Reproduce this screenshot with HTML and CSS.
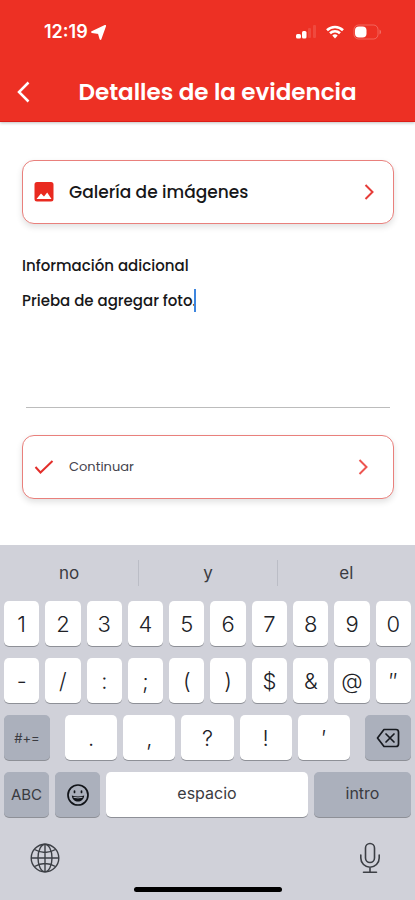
FILE: index.html
```html
<!DOCTYPE html>
<html lang="es">
<head>
<meta charset="utf-8">
<meta name="viewport" content="width=device-width, initial-scale=1">
<title>Detalles de la evidencia</title>
<link rel="stylesheet" href="styles.css">
</head>
<body>
<div class="screen">
  <header class="header">
    <div class="status">
      <span class="clock">12:19
        <svg width="15" height="15" viewBox="0 0 15 15"><path d="M14.200.8 9.500 14 7.800 8.200 1 7Z" fill="#fff" stroke="#fff" stroke-width="1.800" stroke-linejoin="round"/></svg>
      </span>
      <span class="signals">
        <svg width="21" height="14" viewBox="0 0 21 14" fill="#fff"><rect x="0" y="9" width="5" height="4.500" rx="1.500"/><rect x="6" y="6" width="4.500" height="7.500" rx="1.500"/><rect x="12" y="3" width="3" height="10" rx="1" opacity=".12"/><rect x="17" y="0" width="3" height="13" rx="1" opacity=".12"/></svg>
        <svg width="18" height="14" viewBox="0 0 18 14" fill="none" stroke="#fff" stroke-width="2.600"><path d="M1 5.200a11.500 11.500 0 0 1 16 0M4 8.300a7.200 7.200 0 0 1 10 0"/><path d="M6.300 10.600a4 4 0 0 1 5.400 0L9 13.500Z" fill="#fff" stroke="none"/></svg>
        <svg width="29" height="16" viewBox="0 0 29 16"><rect x="1" y="1" width="24" height="14" rx="4.500" fill="none" stroke="#fff" opacity=".25"/><path d="M26.500 5.500c2 .8 2 4.200 0 5Z" fill="#fff" opacity=".3"/><rect x="2" y="2.500" width="11.500" height="11" rx="4" fill="#fff"/></svg>
      </span>
    </div>
    <div class="titlebar">
      <button class="back" type="button" aria-label="Atrás"><svg width="14" height="22" viewBox="0 0 14 22" fill="none" stroke="#fff" stroke-width="2.500"><path d="M12.500 1.500 3 11l9.500 9.500"/></svg></button>
      <h1>Detalles de la evidencia</h1>
    </div>
  </header>

  <main class="content">
    <button class="card" type="button">
      <svg width="20" height="20" viewBox="0 0 20 20"><path fill="#e92a20" fill-rule="evenodd" d="M3 0H17Q19.500 0 19.500 2.500V17Q19.500 19.500 17 19.500H3Q.5 19.500.5 17V2.500Q.5 0 3 0ZM2.500 17H17.500L13.200 10.500 10 14.500 7 11.500Z"/></svg>
      <span class="card-title">Galería de imágenes</span>
      <svg width="10" height="16" viewBox="0 0 10 16" fill="none" stroke="#e63c38" stroke-width="2"><path d="m1.500 1 7 7-7 7"/></svg>
    </button>
    <label class="label" for="info">Información adicional</label>
    <div class="field">
      <textarea id="info">Prieba de agregar foto.</textarea>
      <span class="caret"></span>
    </div>
    <button class="card card-next" type="button">
      <svg width="20" height="20" viewBox="0 0 20 20" fill="none" stroke="#e32f2b" stroke-width="2"><path d="m1.500 10 5 5.500L18.500 4"/></svg>
      <span class="card-text">Continuar</span>
      <svg width="10" height="16" viewBox="0 0 10 16" fill="none" stroke="#ed5550" stroke-width="2"><path d="m1.500 1 7 7-7 7"/></svg>
    </button>
  </main>

  <section class="keyboard" aria-label="Teclado">
    <div class="suggestions"><button type="button">no</button><button type="button">y</button><button type="button">el</button></div>
    <div class="keys">
      <div class="row"><button>1</button><button>2</button><button>3</button><button>4</button><button>5</button><button>6</button><button>7</button><button>8</button><button>9</button><button>0</button></div>
      <div class="row"><button>-</button><button>/</button><button>:</button><button>;</button><button>(</button><button>)</button><button>$</button><button>&amp;</button><button>@</button><button>″</button></div>
      <div class="row row-marks"><button class="gray tiny">#+=</button><div class="marks"><button>.</button><button>,</button><button>?</button><button>!</button><button>′</button></div>
        <button class="gray" aria-label="Borrar"><svg width="24" height="20" viewBox="0 0 24 20" fill="none" stroke="#171a20" stroke-width="1.700" stroke-linejoin="round"><path d="M8 1.500H20Q22.500 1.500 22.500 4V16Q22.500 18.500 20 18.500H8L1.500 10Z"/><path d="m10 6 8 8m0-8-8 8" stroke-linecap="round"/></svg></button></div>
      <div class="row row-space"><button class="gray small">ABC</button>
        <button class="gray" aria-label="Emojis"><svg width="22" height="22" viewBox="0 0 22 22" fill="none" stroke="#111419" stroke-width="1.700"><circle cx="11" cy="11" r="10"/><path d="M4.800 11.500Q11 13.500 17.200 11.500C16.800 15.500 14 17.500 11 17.500S5.200 15.500 4.800 11.500Z" fill="#111419" stroke="none"/><path d="M6.500 13.300q4.500 1.200 9 0" stroke="#abb0bc" stroke-width="1"/><path d="M7.500 7v1.500m7-1.500v1.500" stroke-linecap="round"/></svg></button>
        <button class="medium">espacio</button><button class="gray medium">intro</button></div>
    </div>
    <div class="tools">
      <button type="button" aria-label="Cambiar teclado"><svg width="30" height="30" viewBox="0 0 30 30" fill="none" stroke="#3c3f45" stroke-width="1.400"><circle cx="15" cy="15" r="13.800"/><ellipse cx="15" cy="15" rx="7" ry="13.800"/><path d="M15 1v28M1 15h28M4.500 6.500q10.500 6 21 0M4.500 23.500q10.500-6 21 0"/></svg></button>
      <button type="button" aria-label="Dictado"><svg width="22" height="32" viewBox="0 0 22 32" fill="none" stroke="#3c3f45" stroke-width="1.600" stroke-linecap="round"><rect x="6.500" y="1.500" width="9" height="19" rx="4.500"/><path d="M1.800 13v3a9.200 9.200 0 0 0 18.400 0v-3M11 25.300v5M4.500 30.300h13"/></svg></button>
    </div>
    <div class="home"></div>
  </section>
</div>
</body>
</html>
```
FILE: styles.css
```css
* { box-sizing: border-box; }
body { margin: 0; background: #fff; color: #171719; font-family: Poppins, Inter, sans-serif; }
button { margin: 0; padding: 0; border: 0; background: none; color: inherit; font: inherit; }
svg { display: block; flex: none; }
.screen { min-height: 100vh; display: flex; flex-direction: column; }

.header { background: #ed3024; color: #fff; padding-top: 20px; border-bottom: 1px solid #dc1c17; box-shadow: 0 1px 3px rgba(0, 0, 0, .25); }
.status { height: 24px; padding: 0 33px 0 44px; display: flex; align-items: center; justify-content: space-between; }
.clock { display: flex; align-items: center; gap: 3px; font: 600 18px/24px Inter, sans-serif; }
.signals { display: flex; align-items: center; gap: 9px; }
.titlebar { height: 77px; padding: 20px 16px 0; display: grid; grid-template-columns: 20px 1fr; align-items: center; }
.back { height: 57px; display: flex; align-items: flex-start; padding-top: 17px; }
h1 { margin: 0; font-size: 23px; line-height: 57px; font-weight: 600; white-space: nowrap; text-align: center; }

.content { flex: 1; display: flex; flex-direction: column; padding: 38px 21px 46px 22px; }
.card { height: 64px; display: flex; align-items: center; gap: 15px; padding: 0 19px 0 11px; border: 1px solid #e9807c; border-radius: 12px; background: #fff; text-align: left; box-shadow: 0 3px 6px rgba(0, 0, 0, .12); }
.card-title { flex: 1; font-size: 17px; font-weight: 500; }
.card-text { flex: 1; font-size: 13px; color: #44434d; }
.card-next { padding-right: 25px; }
.label { margin-top: 32px; font-size: 15px; line-height: 20px; font-weight: 500; }
.field { position: relative; height: 120px; margin: 12px 4px 27px; border-bottom: 1px solid #bcbcbc; }
textarea { display: block; width: 100%; height: 116px; margin-left: -4px; padding: 3px 0; border: 0; outline: 0; resize: none; background: none; color: inherit; font: 500 15px/20px Poppins, Inter, sans-serif; }
.caret { position: absolute; left: 168px; top: 1px; width: 2px; height: 23px; background: #3d86df; }

.keyboard { background: #d0d1d9; color: #202126; font-family: Inter, sans-serif; }
.suggestions { height: 56px; padding: 15px 0; display: grid; grid-template-columns: repeat(3, 1fr); }
.suggestions button { font-size: 17px; color: #3a3b41; }
.suggestions button + button { border-left: 1px solid #bbbdc6; }
.keys { display: grid; gap: 12px; padding: 0 4px; }
.row { display: grid; grid-template-columns: repeat(10, 1fr); gap: 6px; }
.row button { height: 45px; min-width: 0; display: flex; align-items: center; justify-content: center; border-radius: 5px; background: #fff; box-shadow: 0 1px 0 #8e9097; font-size: 22px; font-weight: 300; }
.row .gray { background: #abb0bc; }
.row .tiny { font-size: 13px; font-weight: 400; color: #3a3b41; }
.row .small { font-size: 15px; font-weight: 400; color: #3a3b41; }
.row .medium { font-size: 16px; font-weight: 400; color: #3a3b41; padding-bottom: 4px; }
.row-marks { grid-template-columns: 46px 1fr 46px; gap: 15px; }
.marks { display: grid; grid-template-columns: repeat(5, 1fr); gap: 6px; }
.row-space { grid-template-columns: 45px 45px 1fr 97px; }
.tools { display: flex; justify-content: space-between; align-items: center; padding: 2px 34px 0 30px; height: 79px; }
.home { width: 148px; height: 5px; margin: -9px auto 8px; border-radius: 3px; background: #000; }
```
